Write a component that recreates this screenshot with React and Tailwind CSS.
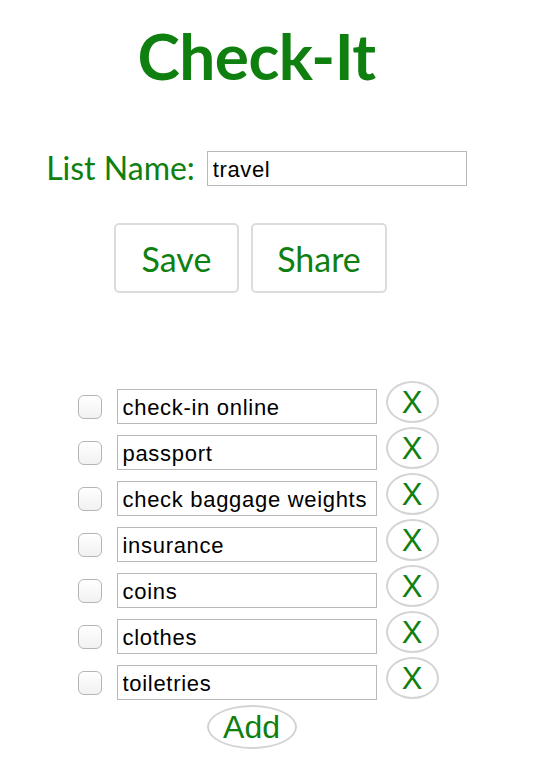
import React, { useState } from "react";

const green = "text-[#0f800f]";

const App = () => {
    const [listName, setListName] = useState("travel");
    const [items, setItems] = useState([
        { text: "check-in online", done: false },
        { text: "passport", done: false },
        { text: "check baggage weights", done: false },
        { text: "insurance", done: false },
        { text: "coins", done: false },
        { text: "clothes", done: false },
        { text: "toiletries", done: false },
    ]);

    const updateItem = (i, patch) =>
        setItems((prev) => prev.map((it, idx) => (idx === i ? { ...it, ...patch } : it)));

    const removeItem = (i) => setItems((prev) => prev.filter((_, idx) => idx !== i));

    const addItem = () => setItems((prev) => [...prev, { text: "", done: false }]);

    return (
        <div className="w-[534px] min-h-[782px] bg-white font-['Lato','Noto_Sans',sans-serif]">
            <div className="w-[513px] flex flex-col items-center">
                {/* Titulo */}
                <h1 className={`mt-[24px] text-[64px] leading-[64px] font-bold tracking-[-0.5px] ${green}`}>
                    Check-It
                </h1>

                {/* Nombre de la lista */}
                <div className="mt-[61px] flex items-center gap-[12px]">
                    <label className={`text-[32px] leading-[38px] ${green}`}>List Name:</label>
                    <input
                        value={listName}
                        onChange={(e) => setListName(e.target.value)}
                        className="w-[260px] h-[35px] border border-[#b9b9b9] px-[5px] pt-[3px] text-[22px] tracking-[0.6px] text-black font-['Liberation_Sans',sans-serif] outline-none"
                    />
                </div>

                {/* Botones */}
                <div className="mt-[36px] flex gap-[12px] mr-[12px]">
                    <button className={`w-[125px] h-[70px] border-2 border-[#dcdcdc] rounded-[5px] bg-white text-[34px] ${green}`}>
                        Save
                    </button>
                    <button className={`w-[136px] h-[70px] border-2 border-[#dcdcdc] rounded-[5px] bg-white text-[34px] ${green}`}>
                        Share
                    </button>
                </div>

                {/* Lista */}
                <div className="mt-[96px] flex flex-col gap-[11px] ml-[3px]">
                    {items.map((it, i) => (
                        <div key={i} className="flex items-center h-[35px]">
                            <input
                                type="checkbox"
                                checked={it.done}
                                onChange={(e) => updateItem(i, { done: e.target.checked })}
                                className="appearance-none w-[24px] h-[24px] border border-[#b5b5b5] rounded-[6px] bg-gradient-to-b from-white to-[#f1f1f1] checked:bg-[#0f800f]"
                            />
                            <input
                                value={it.text}
                                onChange={(e) => updateItem(i, { text: e.target.value })}
                                className="ml-[15px] w-[260px] h-[35px] border border-[#b9b9b9] px-[5px] pt-[3px] text-[22px] tracking-[0.7px] text-black font-['Liberation_Sans',sans-serif] outline-none"
                            />
                            <button
                                onClick={() => removeItem(i)}
                                className={`ml-[9px] -mt-[9px] w-[53px] h-[42px] shrink-0 border-2 border-[#d4d4d4] rounded-[50%] bg-white text-[31px] leading-none font-['Liberation_Sans',sans-serif] ${green}`}
                            >
                                X
                            </button>
                        </div>
                    ))}
                </div>

                <button
                    onClick={addItem}
                    className={`mt-[5px] mr-[10px] w-[90px] h-[44px] border-2 border-[#d4d4d4] rounded-[50%] bg-white text-[32px] leading-none font-['Liberation_Sans',sans-serif] ${green}`}
                >
                    Add
                </button>
            </div>
        </div>
    );
};

export default App;
